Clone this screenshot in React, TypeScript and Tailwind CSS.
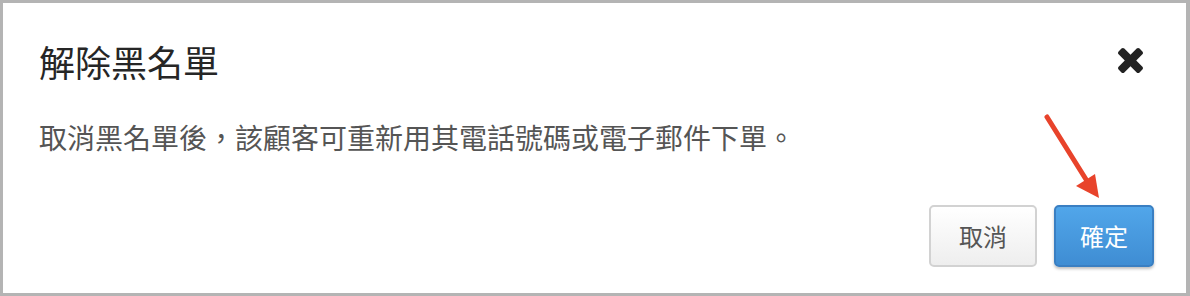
import React from "react";

export default function App() {
  return (
    <div
      className="relative w-[1190px] h-[296px] bg-[#b4b4b4] pt-[3px] pl-[3px] pr-[4px] pb-[3px]"
      style={{ fontFamily: '"Noto Sans CJK TC", "Noto Sans", sans-serif' }}
    >
      <div className="flex h-full flex-col bg-white pl-[36px] pr-[32px]">
        <div className="flex items-center justify-between pt-[37.5px]">
          <h1 className="text-[36px] leading-[40px] text-[#262626] font-normal">解除黑名單</h1>
          <button className="mr-[11px] flex h-[26px] w-[26px] items-center justify-center">
            <svg viewBox="110 470 1188 1188" width="25" height="25" fill="#222">
              <path d="M1298 1426q0 40-28 68l-136 136q-28 28-68 28t-68-28l-294-294-294 294q-28 28-68 28t-68-28l-136-136q-28-28-28-68t28-68l294-294-294-294q-28-28-28-68t28-68l136-136q28-28 68-28t68 28l294 294 294-294q28-28 68-28t68 28l136 136q28 28 28 68t-28 68l-294 294 294 294q28 28 28 68z" />
            </svg>
          </button>
        </div>
        <p className="mt-[36px] text-[28px] leading-[40px] text-[#555]">
          取消黑名單後，該顧客可重新用其電話號碼或電子郵件下單。
        </p>
        <div className="mt-[48.5px] flex justify-end gap-[17px]">
          <button className="h-[62px] w-[108px] rounded-[5px] border-2 border-[#d2d2d2] bg-gradient-to-b from-[#ffffff] to-[#eeeeee] text-[24px] text-[#555]">
            取消
          </button>
          <button className="h-[62px] w-[100px] rounded-[5px] border-2 border-[#3a7fc2] bg-gradient-to-b from-[#51a6ea] to-[#3f8dd3] text-[24px] text-white shadow-[0_2px_3px_rgba(0,0,0,0.25)]">
            確定
          </button>
        </div>
      </div>
      <svg
        className="absolute left-0 top-0 pointer-events-none"
        width="1190"
        height="296"
        viewBox="0 0 1190 296"
      >
        <line x1="1047" y1="117" x2="1087" y2="181" stroke="#e8432b" strokeWidth="5" strokeLinecap="round" />
        <polygon points="1076,186 1095,174 1099,198" fill="#e8432b" />
      </svg>
    </div>
  );
}
